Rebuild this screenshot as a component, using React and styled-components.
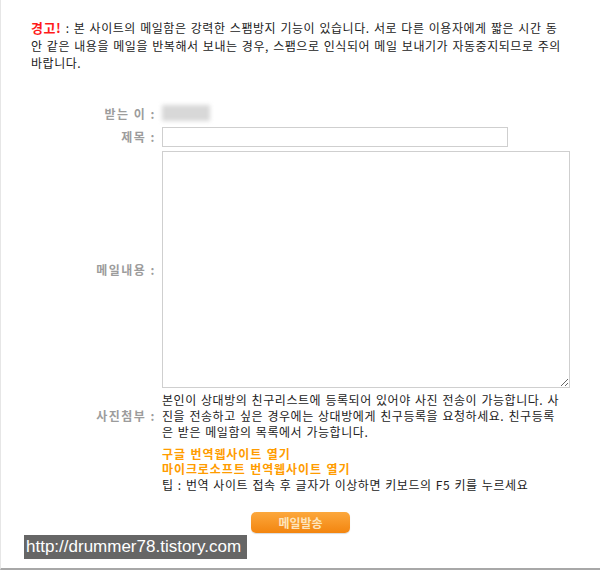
import React from 'react';
import styled, { createGlobalStyle } from 'styled-components';

const GlobalStyle = createGlobalStyle`
  html, body {
    margin: 0;
    padding: 0;
    background: #fff;
  }
  body {
    font-family: "Noto Sans CJK KR", "Noto Sans", sans-serif;
  }
`;

const Page = styled.div`
  width: 600px;
  height: 570px;
  box-sizing: border-box;
  border-left: 1px solid #e6e6e6;
  border-bottom: 2px solid #a8a8a8;
  padding-top: 19px;
`;

const Warning = styled.p`
  margin: 0 0 0 30px;
  font-size: 12px;
  line-height: 17.5px;
  color: #222;
  white-space: nowrap;
  letter-spacing: 0.55px;
  word-spacing: 1px;
`;

const Alert = styled.b`
  color: #ff1a1a;
  font-size: 13px;
`;

const Form = styled.div`
  display: grid;
  grid-template-columns: 155px 1fr;
  column-gap: 6px;
  row-gap: 4px;
  margin-top: 32px;
`;

const Label = styled.div`
  display: flex;
  align-items: center;
  justify-content: flex-end;
  font-size: 12px;
  font-weight: 700;
  color: #9c9c9c;
  letter-spacing: 1.5px;
  white-space: nowrap;
`;

const Cell = styled.div`
  display: flex;
  align-items: center;
  min-height: ${p => p.h || 0}px;
`;

const Hidden = styled.span`
  display: block;
  width: 48px;
  height: 16px;
  background: #d8d8d8;
  filter: blur(2px);
`;

const TextInput = styled.input`
  box-sizing: border-box;
  width: 346px;
  height: 20px;
  border: 1px solid #cfcfcf;
  padding: 0 3px;
  margin: 0;
  outline: none;
`;

const TextArea = styled.textarea`
  box-sizing: border-box;
  width: 408px;
  height: 237px;
  border: 1px solid #cfcfcf;
  margin: 0;
  padding: 2px;
  outline: none;
  display: block;
`;

const Note = styled.p`
  margin: 0;
  font-size: 12px;
  line-height: 16px;
  color: #222;
  white-space: nowrap;
  letter-spacing: 0.55px;
  word-spacing: 1px;
`;

const Extras = styled.div`
  padding-top: 2px;
  letter-spacing: 0.55px;
  word-spacing: 1px;
`;

const Link = styled.a`
  display: block;
  color: #ff9c00;
  font-weight: 700;
  font-size: 12px;
  line-height: 15.5px;
  text-decoration: none;
  letter-spacing: 0.9px;
`;

const Tip = styled.div`
  font-size: 12px;
  line-height: 15px;
  color: #222;
`;

const Actions = styled.div`
  display: flex;
  justify-content: center;
  margin-top: 20px;
`;

const SendButton = styled.button`
  width: 99px;
  height: 21px;
  border: none;
  border-radius: 5px;
  background: linear-gradient(#fca83d, #f3850f);
  box-shadow: 0 1px 1px rgba(0, 0, 0, 0.15);
  color: #fde4bd;
  font-family: "Noto Sans CJK KR", sans-serif;
  font-size: 12px;
  font-weight: 700;
  padding: 0;
  cursor: pointer;
`;

const Stamp = styled.div`
  display: inline-block;
  margin: 1px 0 0 23px;
  background: #666;
  color: #fff;
  font-family: "Liberation Sans", Arial, sans-serif;
  font-size: 17px;
  line-height: 24px;
  padding: 0 6px 0 2px;
`;

export default function App() {
  return (
    <>
      <GlobalStyle />
      <Page>
        <Warning>
          <Alert>경고!</Alert> : 본 사이트의 메일함은 강력한 스팸방지 기능이 있습니다. 서로 다른 이용자에게 짧은 시간 동<br />
          안 같은 내용을 메일을 반복해서 보내는 경우, 스팸으로 인식되어 메일 보내기가 자동중지되므로 주의<br />
          바랍니다.
        </Warning>

        <Form>
          <Label>받는 이 :</Label>
          <Cell h={19}><Hidden /></Cell>

          <Label>제목 :</Label>
          <Cell><TextInput /></Cell>

          <Label>메일내용 :</Label>
          <Cell><TextArea /></Cell>

          <Label>사진첨부 :</Label>
          <Note>
            본인이 상대방의 친구리스트에 등록되어 있어야 사진 전송이 가능합니다. 사<br />
            진을 전송하고 싶은 경우에는 상대방에게 친구등록을 요청하세요. 친구등록<br />
            은 받은 메일함의 목록에서 가능합니다.
          </Note>

          <Label />
          <Extras>
            <Link href="#">구글 번역웹사이트 열기</Link>
            <Link href="#">마이크로소프트 번역웹사이트 열기</Link>
            <Tip>팁 : 번역 사이트 접속 후 글자가 이상하면 키보드의 F5 키를 누르세요</Tip>
          </Extras>
        </Form>

        <Actions>
          <SendButton>메일발송</SendButton>
        </Actions>

        <Stamp>http://drummer78.tistory.com</Stamp>
      </Page>
    </>
  );
}
